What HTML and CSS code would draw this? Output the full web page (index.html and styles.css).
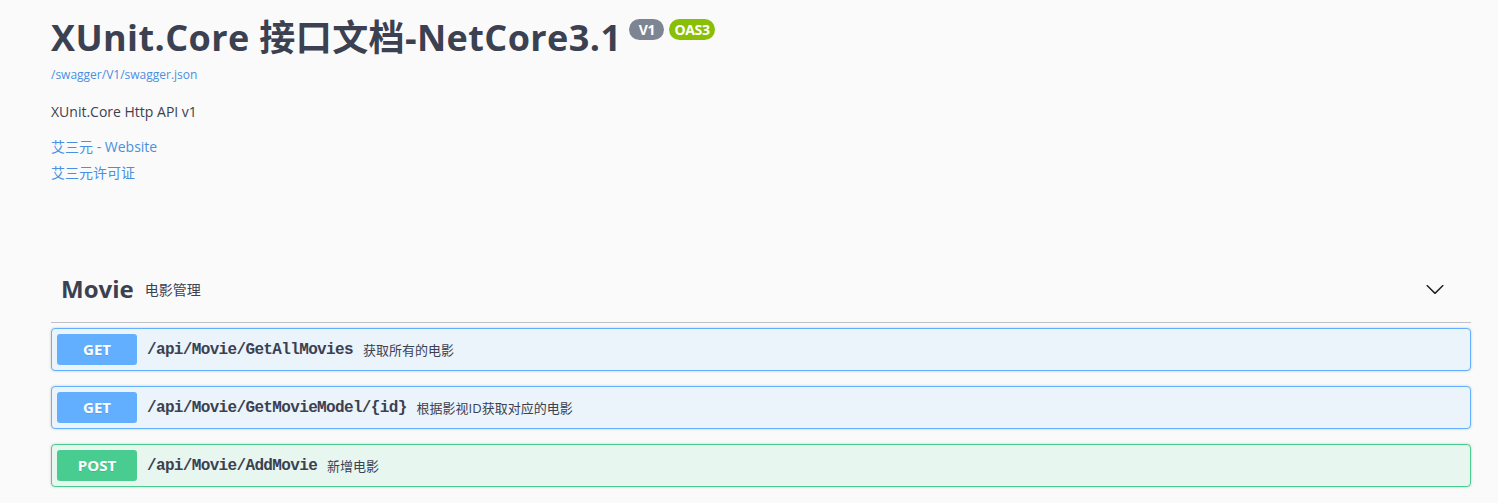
FILE: index.html
```html
<!DOCTYPE html>
<html lang="zh-CN">
<head>
<meta charset="utf-8">
<title>Swagger UI</title>
<link rel="stylesheet" href="styles.css">
</head>
<body>
<div class="wrapper">
  <section class="info">
    <hgroup class="main">
      <h2 class="title"><span class="title-text">XUnit.Core 接口文档-NetCore3.1</span><span class="badge badge-v">V1</span><span class="badge badge-oas">OAS3</span></h2>
      <a class="url" href="#">/swagger/V1/swagger.json</a>
    </hgroup>
    <p class="desc">XUnit.Core Http API v1</p>
    <div class="links">
      <a class="link" href="#">艾三元 - Website</a>
      <a class="link" href="#">艾三元许可证</a>
    </div>
  </section>

  <section class="tag">
    <h4 class="tag-head">
      <span class="tag-name">Movie</span>
      <small class="tag-desc">电影管理</small>
      <span class="spacer"></span>
      <button class="expand" type="button" aria-label="collapse">
        <svg width="20" height="20" viewBox="0 0 20 20" aria-hidden="true"><path d="M17.418 6.109c.272-.268.709-.268.979 0s.271.701 0 .969l-7.908 7.83c-.27.268-.707.268-.979 0l-7.908-7.83c-.27-.268-.27-.701 0-.969.271-.268.709-.268.979 0L10 13.25l7.418-7.141z"/></svg>
      </button>
    </h4>

    <div class="opblock opblock-get">
      <span class="method">GET</span>
      <span class="path">/api/Movie/GetAllMovies</span>
      <span class="op-desc">获取所有的电影</span>
    </div>
    <div class="opblock opblock-get">
      <span class="method">GET</span>
      <span class="path">/api/Movie/GetMovieModel/{id}</span>
      <span class="op-desc">根据影视ID获取对应的电影</span>
    </div>
    <div class="opblock opblock-post">
      <span class="method">POST</span>
      <span class="path">/api/Movie/AddMovie</span>
      <span class="op-desc">新增电影</span>
    </div>
  </section>
</div>
</body>
</html>
```

FILE: styles.css
```css
html, body {
  margin: 0;
  padding: 0;
  background: #fafafa;
}

body {
  font-family: "Open Sans", "Noto Sans CJK SC", sans-serif;
  color: #3b4151;
}

.wrapper {
  width: 1420px;
  margin-left: 51px;
  padding-top: 15px;
}

.main {
  margin: 0;
}

.title {
  display: flex;
  align-items: flex-start;
  margin: 0;
  font-size: 36px;
  line-height: 46px;
  font-weight: 700;
  letter-spacing: 0.4px;
  color: #3b4151;
}

.badge {
  display: inline-flex;
  align-items: center;
  justify-content: center;
  box-sizing: border-box;
  height: 21px;
  min-width: 35px;
  padding: 0 5px;
  margin-top: 4px;
  border-radius: 57px;
  font-size: 14px;
  line-height: 21px;
  font-weight: 700;
  letter-spacing: -0.3px;
  color: #fff;
}

.badge-v {
  margin-left: 8px;
  background: #7d8492;
}

.badge-oas {
  margin-left: 5px;
  background: #89bf04;
}

.url {
  display: block;
  margin-top: 6px;
  font-size: 12px;
  line-height: 16px;
  color: #4990e2;
  text-decoration: none;
}

.desc {
  margin: 19px 0 0;
  font-size: 14px;
  line-height: 20px;
}

.links {
  margin-top: 12px;
  display: flex;
  flex-direction: column;
}

.link {
  font-size: 14px;
  line-height: 26px;
  color: #4990e2;
  text-decoration: none;
}

.tag {
  margin-top: 69px;
}

.tag-head {
  display: flex;
  align-items: center;
  box-sizing: border-box;
  height: 68px;
  margin: 0 0 5px;
  padding: 10px 20px 10px 10px;
  border-bottom: 1px solid rgba(59, 65, 81, 0.3);
  font-weight: 700;
}

.tag-name {
  font-size: 24px;
  line-height: 32px;
  color: #3b4151;
}

.tag-desc {
  padding: 0 10px 0 11px;
  font-size: 14px;
  font-weight: 400;
  color: #3b4151;
}

.spacer {
  flex: 1;
}

.expand {
  display: flex;
  align-items: center;
  padding: 0 6px 0 10px;
  border: none;
  background: none;
}

.expand svg {
  display: block;
  fill: #1f1f1f;
}

.opblock {
  display: flex;
  align-items: center;
  box-sizing: border-box;
  height: 43px;
  margin: 0 0 15px;
  padding: 5px;
  border: 1px solid;
  border-radius: 4px;
  box-shadow: 0 0 3px rgba(0, 0, 0, 0.19);
}

.opblock-get {
  background: #ebf3fb;
  border-color: #61affe;
}

.opblock-post {
  background: #e8f6f0;
  border-color: #49cc90;
}

.method {
  box-sizing: border-box;
  min-width: 80px;
  padding: 6px 15px;
  border-radius: 3px;
  font-size: 15px;
  line-height: 19px;
  font-weight: 700;
  text-align: center;
  color: #fff;
  text-shadow: 0 1px 0 rgba(0, 0, 0, 0.1);
}

.opblock-get .method {
  background: #61affe;
}

.opblock-post .method {
  background: #49cc90;
}

.path {
  padding: 0 10px;
  font-family: "Liberation Mono", monospace;
  font-size: 16px;
  letter-spacing: -0.65px;
  font-weight: 700;
  color: #3b4151;
}

.op-desc {
  font-size: 13px;
  color: #3b4151;
}
```
